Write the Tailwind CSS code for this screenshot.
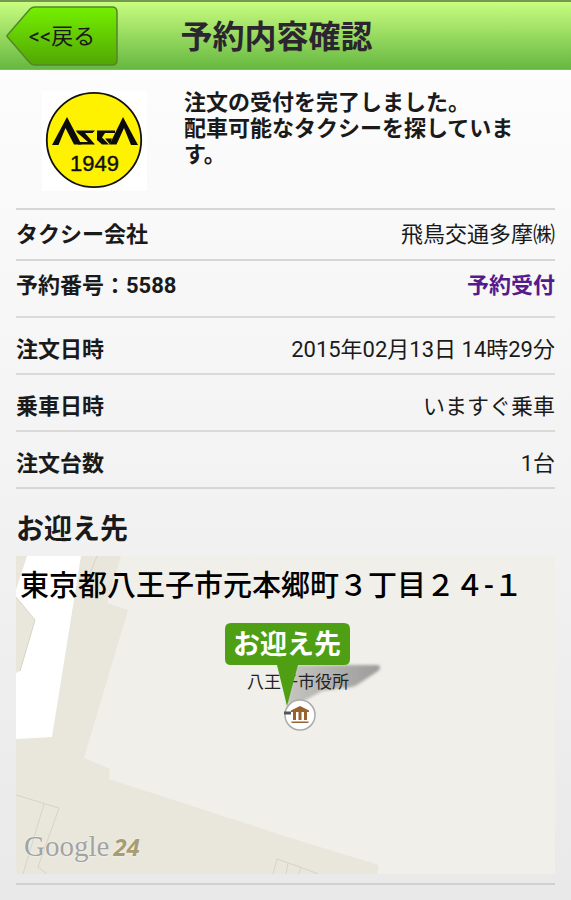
<!DOCTYPE html>
<html lang="ja">
<head>
	<meta charset="UTF-8">
	<meta name="viewport" content="width=device-width, initial-scale=1.0">
	<script src="https://cdn.jsdelivr.net/npm/@tailwindcss/browser@4"></script>
	<title>予約内容確認</title>
</head>

<body class="min-h-screen bg-linear-to-b from-[#fefefe] to-[#e9e9e9] font-[Roboto,'Noto_Sans_CJK_JP',sans-serif] text-[22px] leading-6 text-[#1a1a1a]">
	<!-- Header -->
	<header class="grid grid-cols-[1fr_auto_1fr] items-center h-[70px] pl-1.5 pr-6 border-t-2 border-t-[#74984f] border-b border-b-[#85b56c] bg-linear-to-b from-[#c8fd80] to-[#66b840]">
		<button type="button" class="relative w-28 h-[60px] px-2 pt-0.5 justify-self-start text-center">
			<svg class="absolute inset-0 w-full h-full" viewBox="0 0 112 60" preserveAspectRatio="none" aria-hidden="true">
				<defs>
					<linearGradient id="back" x1="0" y1="0" x2="0" y2="1">
						<stop offset="0" stop-color="#74f000"/>
						<stop offset="1" stop-color="#52a604"/>
					</linearGradient>
				</defs>
				<path d="M29 1H106Q111 1 111 6V54Q111 59 106 59H29Q26 59 24 57L1.500 31Q0.500 30 1.500 29L24 3Q26 1 29 1Z" fill="url(#back)" stroke="#55852c" stroke-width="1.500"/>
			</svg>
			<span class="relative">&lt;&lt;戻る</span>
		</button>
		<h1 class="pt-0.5 text-[32px] leading-10 font-bold text-[#2b2530]">予約内容確認</h1>
	</header>

	<main class="px-4">
		<!-- Status -->
		<div class="flex gap-9 pt-5 pb-4 pl-6">
			<svg class="w-[108px] h-[102px] shrink-0" viewBox="40 90 108 102" role="img" aria-label="飛鳥交通">
				<rect x="42" y="91" width="105" height="100" fill="#fff"/>
				<circle cx="94" cy="140" r="47.200" fill="#fff200" stroke="#111" stroke-width="1.800"/>
				<g fill="#0c0c0c">
					<path d="M52 145L67 117L81.500 144.500H74L65.500 128L58.500 145Z"/>
					<path d="M76 130.500H95L92.500 133H85L95 144.500H78L77 142H88L77 132.500Z"/>
					<path d="M97 130.500H115V133H105L102 137.500L109 144.500H102L97 140Z"/>
					<path d="M105 138.500H112L110 144.500Z"/>
					<path d="M138 145L123 117L109.500 144.500H116.500L124 128L131 145Z"/>
				</g>
				<text x="94.500" y="170.500" text-anchor="middle" font-family="'Liberation Sans',sans-serif" font-size="22" fill="#111" stroke="#111" stroke-width=".4">1949</text>
			</svg>
			<p class="flex-1 pr-6 leading-[26px] font-bold">注文の受付を完了しました。<br>配車可能なタクシーを探しています。</p>
		</div>

		<!-- Order details -->
		<dl class="border-t-2 border-[#d6d6d6]">
			<div class="flex justify-between pt-[13px] pb-3 border-b-2 border-[#d6d6d6]">
				<dt class="font-bold">タクシー会社</dt>
				<dd>飛鳥交通多摩㈱</dd>
			</div>
			<div class="flex justify-between pt-[13px] pb-[18px] border-b-2 border-[#dadada]">
				<dt class="font-bold">予約番号：5588</dt>
				<dd class="font-bold text-[#551a8b]">予約受付</dd>
			</div>
			<div class="flex justify-between pt-5 pb-[11px] border-b-2 border-[#dadada]">
				<dt class="font-bold">注文日時</dt>
				<dd>2015年02月13日 14時29分</dd>
			</div>
			<div class="flex justify-between pt-5 pb-[11px] border-b-2 border-[#dadada]">
				<dt class="font-bold">乗車日時</dt>
				<dd>いますぐ乗車</dd>
			</div>
			<div class="flex justify-between pt-5 pb-[11px] border-b-2 border-[#d6d6d6]">
				<dt class="font-bold">注文台数</dt>
				<dd>1台</dd>
			</div>
		</dl>

		<!-- Pick-up place -->
		<section class="pb-[9px] border-b-2 border-[#d0d0d0]">
			<h2 class="pt-[23px] pb-2 text-[28px] leading-9 font-bold">お迎え先</h2>
			<div class="relative h-[318px] overflow-hidden bg-[#f0efea]">
				<svg class="absolute inset-0 w-full h-full" viewBox="0 0 539 318" preserveAspectRatio="xMidYMid slice" font-family="'Noto Sans CJK JP',sans-serif">
					<defs>
						<linearGradient id="shadow" x1="0" y1="0" x2="1" y2="0">
							<stop offset="0" stop-color="#777" stop-opacity=".35"/>
							<stop offset="1" stop-color="#777" stop-opacity=".7"/>
						</linearGradient>
						<filter id="soft"><feGaussianBlur stdDeviation="1.500"/></filter>
					</defs>
					<!-- Blocks and roads -->
					<path d="M0 0H105L91 47L112 54L68 202L94 213L93 223L284 285L363 309L361 318H0Z" fill="#e9e6dc"/>
					<path d="M11 0H65L36 181L0 183V117L4 115L19 64L0 41V34Z" fill="#fff"/>
					<g fill="none" stroke="#d6d3c8">
						<path d="M0 41L19 64L4 115"/>
						<path d="M81 0L72 22"/>
						<path d="M0 239L43 252L22 311L31 318"/>
						<path d="M28 248L7 318"/>
						<path d="M257 318L261 303L284 311L302 318"/>
						<path d="M272 307L270 318M285 311L283 318"/>
					</g>
					<!-- City hall -->
					<path d="M281 109H361Q367 110 362 115L341 129Q336 132 326 132L306 135L286 146L270 149Z" fill="url(#shadow)" filter="url(#soft)"/>
					<text x="231" y="132" font-size="17" fill="#222">八王子市役所</text>
					<circle cx="284" cy="159" r="15" fill="#fff" stroke="#aaa" stroke-width="1.500"/>
					<g fill="#96602f">
						<path d="M275 154.500L284 150L293 154.500V156H275Z"/>
						<path d="M277 156h3v8h-3zM282.500 156h3v8h-3zM288 156h3v8h-3z"/>
						<path d="M275.500 165.500h17v1.500h-17z"/>
					</g>
					<path d="M268 157h7" stroke="#555" stroke-width="3"/>
					<!-- Pin -->
					<path d="M215 67H328Q334 67 334 73V103Q334 109 328 109H282L271 150L261 109H215Q209 109 209 103V73Q209 67 215 67Z" fill="#4f9f15"/>
					<text x="271" y="98" text-anchor="middle" font-size="27" font-weight="700" fill="#fff">お迎え先</text>
				</svg>
				<p class="relative pl-1 pt-3 text-[29px] leading-9 font-medium text-black">東京都八王子市元本郷町３丁目２４-１</p>
				<div class="absolute left-2 bottom-2.5 flex items-baseline gap-1 text-shadow-[0_0_2px_white]">
					<span class="font-['Liberation_Serif',serif] text-[29px] leading-9 text-[#a3a3a0]">Google</span>
					<span class="font-['Open_Sans',sans-serif] text-2xl font-bold italic text-[#a89d72]">24</span>
				</div>
			</div>
		</section>
	</main>
</body>
</html>
